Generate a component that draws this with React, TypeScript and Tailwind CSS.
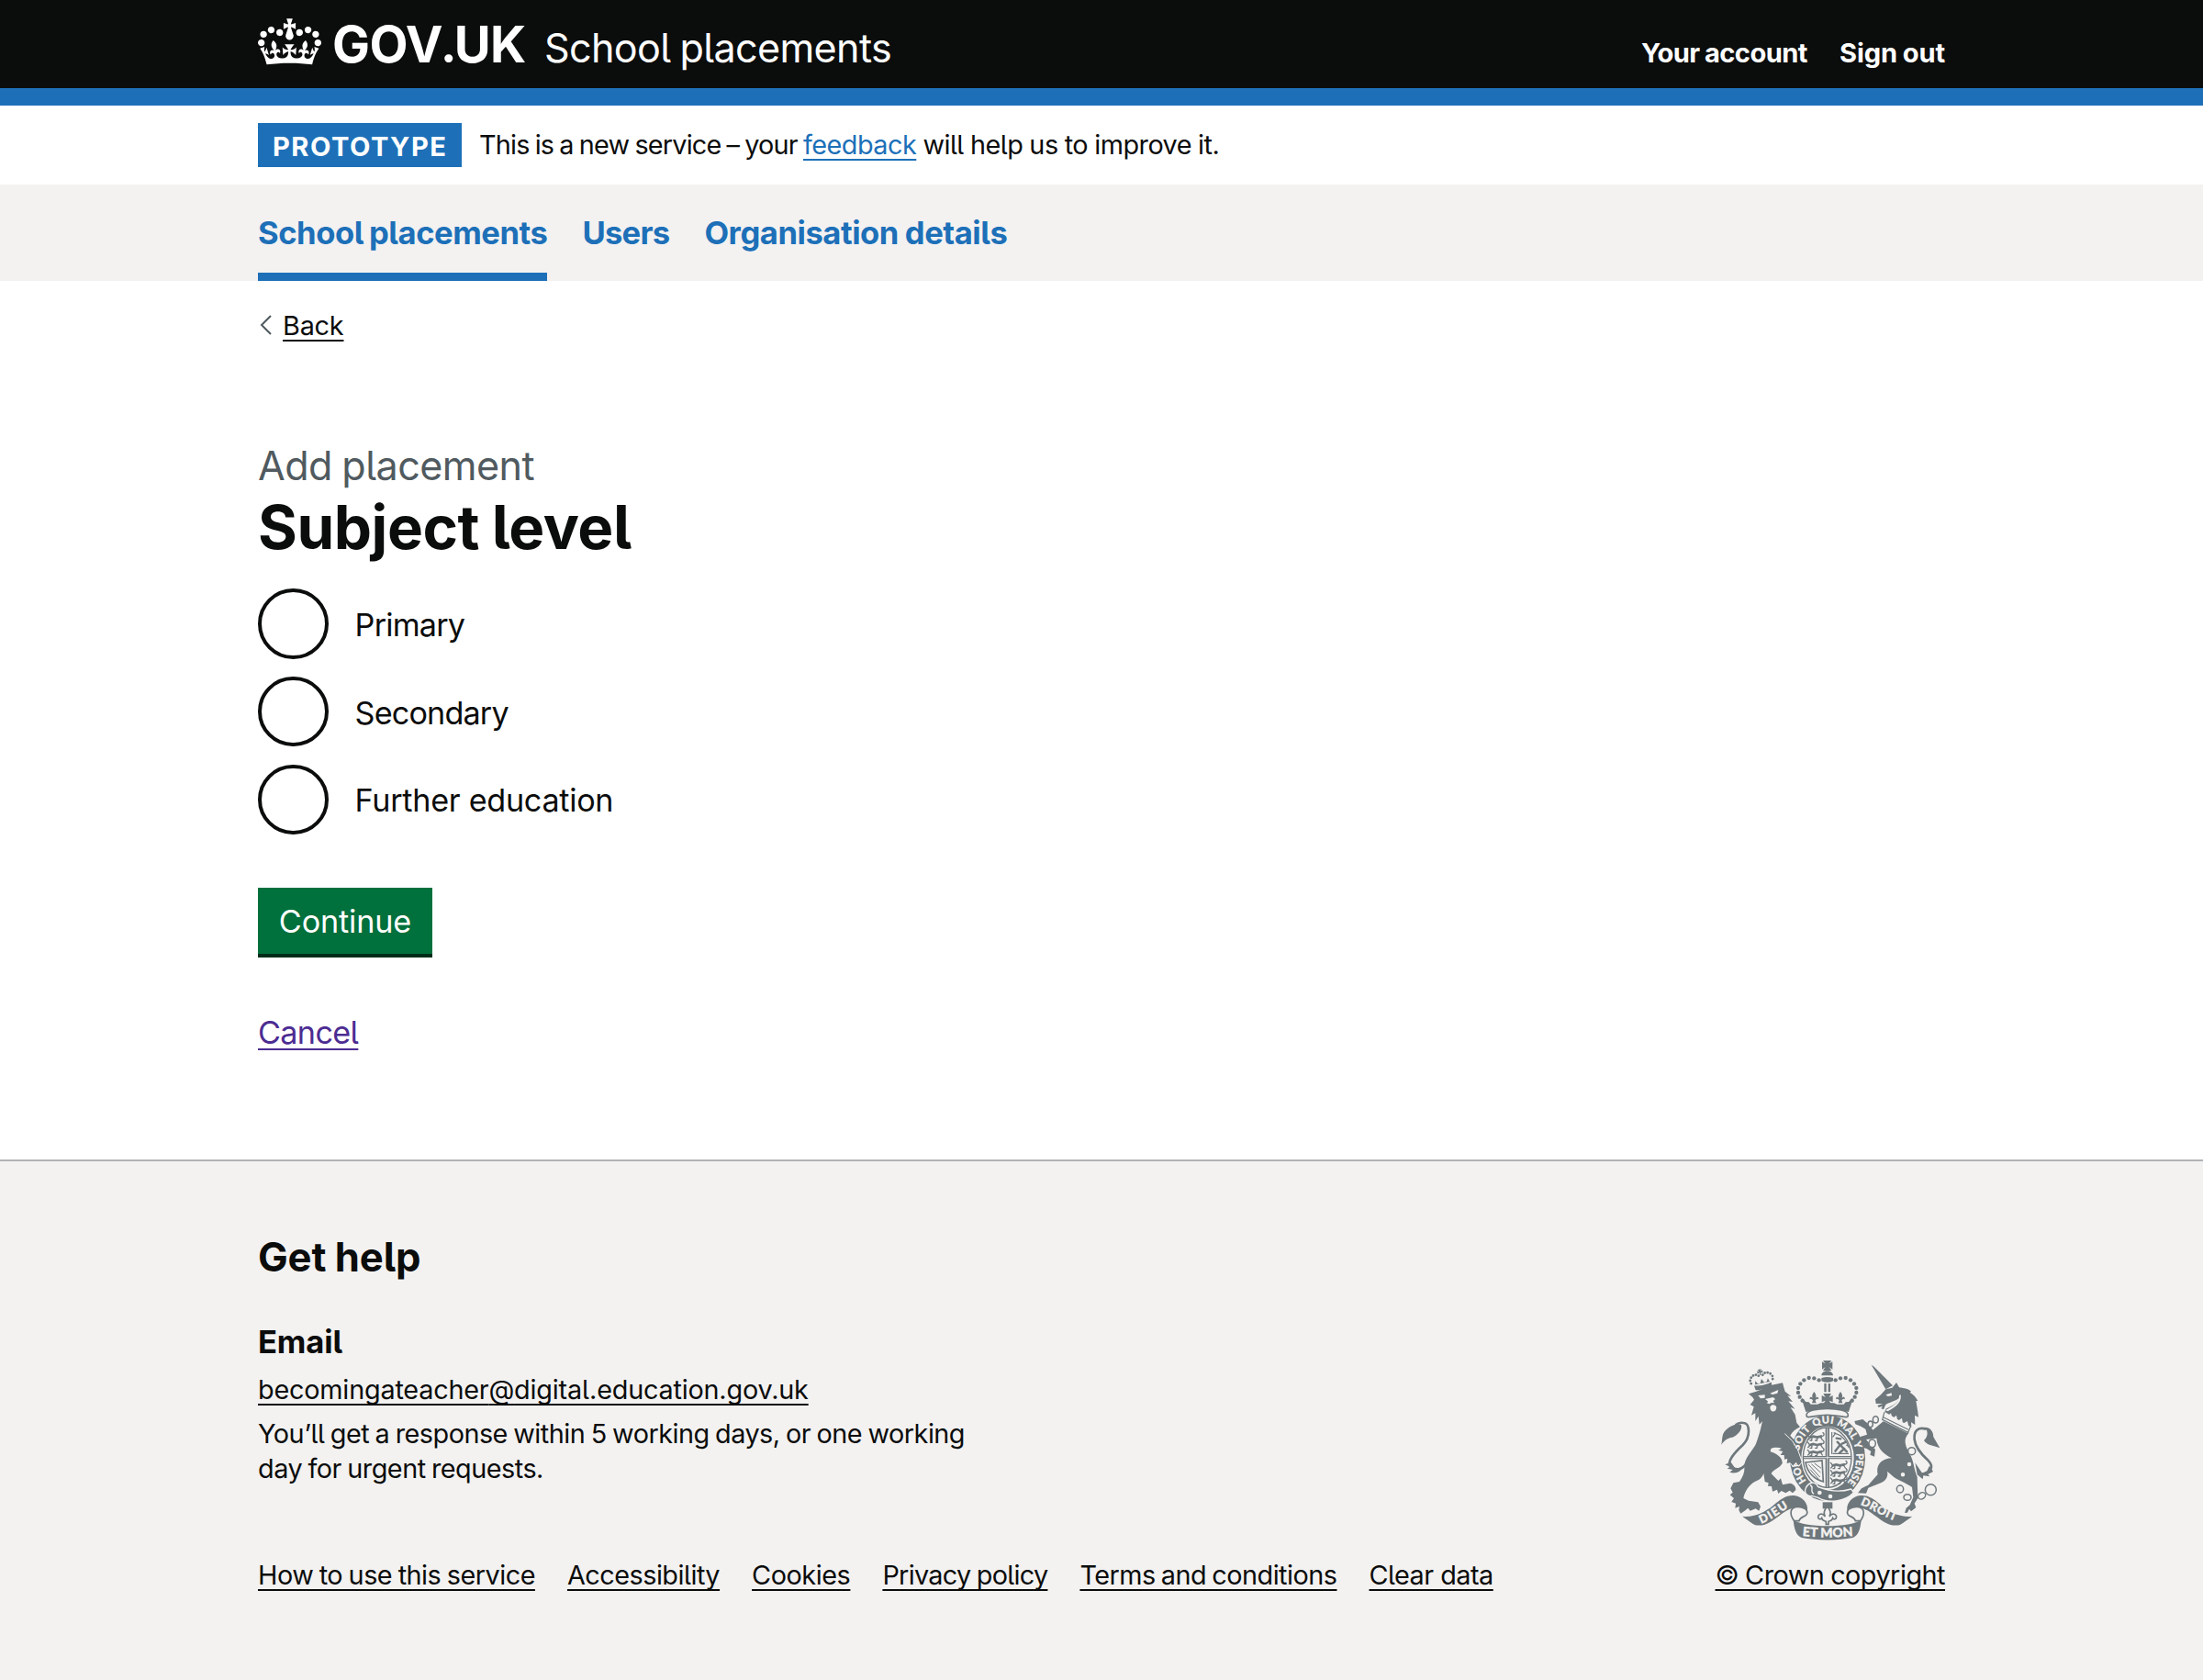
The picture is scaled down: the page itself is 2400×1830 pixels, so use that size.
import React from "react";

function Crown() {
  return (
    <svg viewBox="0 0 132 97" className="mt-[20px] h-[51px] w-[69px] shrink-0 fill-white" aria-hidden="true">
      <path d="M25 30.2c3.5 1.5 7.7-.2 9.1-3.7 1.5-3.6-.2-7.8-3.9-9.2-3.6-1.4-7.6.3-9.1 3.9-1.4 3.5.3 7.5 3.9 9zM9 39.5c3.6 1.5 7.8-.2 9.2-3.7 1.5-3.6-.2-7.8-3.9-9.1-3.6-1.5-7.6.2-9.1 3.8-1.4 3.5.3 7.5 3.8 9zM4.4 57.2c3.5 1.5 7.7-.2 9.1-3.8 1.5-3.6-.2-7.7-3.9-9.1-3.5-1.5-7.6.3-9.1 3.8-1.4 3.5.3 7.6 3.9 9.1zm38.3-21.4c3.5 1.5 7.7-.2 9.1-3.8 1.5-3.6-.2-7.7-3.9-9.1-3.6-1.5-7.6.3-9.1 3.8-1.3 3.6.4 7.7 3.9 9.1zm64.4-5.6c-3.6 1.5-7.8-.2-9.1-3.7-1.5-3.6.2-7.8 3.8-9.2 3.6-1.4 7.7.3 9.2 3.9 1.3 3.5-.4 7.5-3.9 9zm15.9 9.3c-3.6 1.5-7.7-.2-9.1-3.7-1.5-3.6.2-7.8 3.7-9.1 3.6-1.5 7.7.2 9.2 3.8 1.5 3.5-.3 7.5-3.8 9zm4.7 17.7c-3.6 1.5-7.8-.2-9.2-3.8-1.5-3.6.2-7.7 3.9-9.1 3.6-1.5 7.7.3 9.2 3.8 1.3 3.5-.4 7.6-3.9 9.1zM89.3 35.8c-3.6 1.5-7.8-.2-9.2-3.8-1.4-3.6.2-7.7 3.9-9.1 3.6-1.5 7.7.3 9.2 3.8 1.4 3.6-.3 7.7-3.9 9.1zM69.7 17.7l8.9 4.7V9.3l-8.9 2.8c-.2-.3-.5-.6-.9-.9L72.4 0H59.6l3.5 11.2c-.3.3-.6.5-.9.9l-8.8-2.8v13.1l8.8-4.7c.3.3.6.7.9.9l-5 15.4v.1c-.2.8-.4 1.6-.4 2.4 0 4.1 3.1 7.5 7 8.1h.2c.3 0 .7.1 1 .1.4 0 .7 0 1-.1h.2c4-.6 7.1-4.1 7.1-8.1 0-.8-.1-1.7-.4-2.4V34l-5.1-15.4c.4-.2.7-.6 1-.9zM66 92.8c16.9 0 32.8 1.1 47.1 3.2 4-16.9 8.9-26.7 14-33.5l-9.6-3.4c1 4.9 1.1 7.2 0 10.2-1.5-1.4-3-4.3-4.2-8.7L108.6 76c2.8-2 5-3.2 7.5-3.3-4.4 9.4-10 11.9-13.6 11.2-4.3-.8-6.3-4.6-5.6-7.9 1-4.7 5.7-5.9 8-.5 4.3-8.7-3-11.4-7.6-8.8 7.1-7.2 7.9-13.5 2.1-21.1-8 6.1-8.1 12.3-4.5 20.8-4.7-5.4-12.1-2.5-9.5 6.2 3.4-5.2 7.9-2 7.2 3.1-.6 4.3-6.4 7.8-13.5 7.2-10.3-.9-10.9-8-11.2-13.8 2.5-.5 7.1 1.8 11 7.3L80.2 60c-4.1 4.4-8 5.3-12.3 5.4 1.4-4.4 8-11.6 8-11.6H55.5s6.4 7.2 7.9 11.6c-4.2-.1-8-1-12.3-5.4l1.4 16.4c3.9-5.5 8.5-7.7 10.9-7.3-.3 5.8-.9 12.8-11.1 13.8-7.2.6-12.9-2.9-13.5-7.2-.7-5 3.8-8.3 7.1-3.1 2.7-8.7-4.6-11.6-9.4-6.2 3.7-8.5 3.6-14.7-4.6-20.8-5.8 7.6-5 13.9 2.2 21.1-4.7-2.6-11.9.1-7.7 8.8 2.3-5.5 7.1-4.2 8.1.5.7 3.3-1.3 7.1-5.7 7.9-3.5.7-9-1.8-13.5-11.2 2.5.1 4.7 1.3 7.5 3.3l-4.7-15.4c-1.2 4.4-2.7 7.2-4.3 8.7-1.1-3-.9-5.3 0-10.2l-9.5 3.4c5 6.9 9.9 16.7 14 33.5 14.8-2.1 30.8-3.2 47.7-3.2z" />
    </svg>
  );
}

/* Left-hand arch of the royal crown; the right-hand one is its mirror image. */
const beads: [number, number][] = [
  [395, 128], [379, 122], [362, 121], [346, 128], [334, 140], [327, 154], [327, 169], [332, 183], [341, 195],
];

const lionCrownBeads: [number, number][] = [
  [172, 132], [171, 122], [176, 113], [184, 108], [193, 107], [201, 112],
  [215, 112], [223, 107], [232, 108], [240, 113], [245, 122], [244, 132],
];

/* Words on the garter: distance along the ring, then length. */
const garterWords: [string, number, number][] = [
  ["HON", 0, 78],
  ["SOIT", 104, 80],
  ["QUI", 198, 64],
  ["MAL", 273, 74],
  ["Y", 356, 20],
  ["PENSE", 392, 102],
];

function Fleur({ x, y }: { x: number; y: number }) {
  return (
    <path
      transform={`translate(${x} ${y})`}
      d="M0-22C6-14 8-8 5-1C9-8 16-5 14 3C10-1 7 2 4 6L7 15H-7L-4 6C-7 2-10-1-14 3C-16-5-9-8-5-1C-8-8-6-14 0-22Z"
    />
  );
}

/* Walking lions, stacked, as they appear in a quarter of the shield. */
function Lions({ x, y }: { x: number; y: number }) {
  return (
    <g transform={`translate(${x} ${y})`} strokeLinecap="round" fill="none" stroke="#6e777b">
      {[0, 25, 50].map((dy) => (
        <g key={dy} transform={`translate(0 ${dy})`}>
          <path strokeWidth="8" d="M9 7L20 4L32 7L46 4" />
          <path strokeWidth="4" d="M10 8L3 15M16 8L15 17L10 17M34 8L32 17L27 17M44 6L50 15M47 3C56 4 58-4 52-8M6 3L2-2" />
        </g>
      ))}
    </g>
  );
}

function Crest() {
  const g = "#6e777b";
  const w = "#f3f2f1";
  return (
    <svg viewBox="66 58 732 600" className="h-[200px] w-[244px]" fill={g} aria-hidden="true">
      {/* lion */}
      <path d="M165 173L190 165L240 144L276 137L280 152L284 165L304 181L292 179L309 199L295 197L316 222L302 217L317 241L322 268L333 281C318 288 308 297 301 309L318 328L334 352L337 395L325 407L320 394L310 407L303 396L290 400L292 385L281 387L285 373L269 373L277 361L262 357L273 351C262 347 246 347 238 352L236 362C256 368 277 381 275 400C267 416 243 421 239 434L262 457L270 449L276 470L300 465C311 467 320 476 319 487L309 497L299 489L286 497L272 490L262 499L258 486L243 492L240 475L228 474L230 464L218 460L214 433C209 448 199 455 185 460C165 472 152 492 148 514L165 522L196 527L204 541L199 555L188 548L170 555L163 546L152 555L139 564L133 553L135 541L121 546L123 531L109 526L117 514L104 503L113 495L106 482L115 464L135 460C149 440 153 424 151 404C158 372 184 352 190 333C199 308 204 290 210 262L200 273L197 246L187 262L187 236L174 243L182 215L170 208L183 192L178 184Z" />
      <path fill={w} d="M196 178L218 176L218 186L204 188ZM235 171L262 160L259 171L243 175ZM219 190L245 184L252 190L245 196L249 203L240 202L232 206L224 203L229 198ZM236 214C241 206 254 208 256 217C256 228 248 233 241 230C236 226 234 220 236 214Z" />
      <path fill="none" stroke={g} strokeWidth="8" d="M158 400C146 420 126 424 108 412C88 398 122 362 146 340C172 314 170 268 148 268C138 266 128 270 122 275" />
      <path d="M72 344C83 333 72 306 92 290C107 277 128 268 141 274C146 290 128 309 112 315C95 317 84 326 72 344ZM88 404L107 396L124 420L148 408C142 426 124 436 103 429L113 421L95 417L104 411Z" />
      {/* lion's crown */}
      <g transform="rotate(-12 208 130)">
        <path d="M180 141C196 146 222 146 238 141L236 156C222 159 196 159 182 156ZM184 138L187 126L193 136L201 138L208 124L215 138L223 136L229 126L233 138ZM202 92H214L210 99L217 96V106L210 102V111H206V102L199 106V96L206 99Z" />
        {lionCrownBeads.map(([x, y]) => (
          <circle key={x} cx={x} cy={y} r="4.2" />
        ))}
      </g>

      {/* unicorn */}
      <path d="M566 78L575 84L636 146L613 158Z" />
      <path d="M613 158L634 153L648 136L657 152C674 154 689 158 696 165L692 168C704 175 712 184 718 196L712 196L715 214L718 232L720 249L708 243L709 274L696 266L697 282L668 266L610 232L613 222L634 212C644 206 655 196 660 184C646 198 624 200 613 208L606 224L598 221L603 213L590 217L586 211L604 205L581 205L579 191L597 176Z" />
      <path fill={w} d="M613 176L632 170L633 179L620 181ZM662 176C666 198 648 215 620 230L612 226C640 213 657 200 657 178Z" />
      <path d="M606 262L689 300C673 317 672 335 690 366C706 392 704 418 716 444L718 514L707 531L712 544L696 557L690 549L684 561L675 562L680 546L692 536L703 511L699 478C680 463 648 454 632 438L618 426C622 443 614 456 597 464L556 480L549 498L522 497L534 482L556 471L587 436C580 407 598 384 633 383C612 372 586 356 583 318L549 322L566 343L579 354L576 378L562 372L565 361L551 352L527 345L523 315L552 306L547 288L532 279L514 272L511 262L538 256L560 275L571 291Z" />
      <path fill={w} d="M603 256L609 230L618 246L630 236L635 254L648 243L652 262L666 252L669 270L684 262L692 298L684 301L601 260Z" />
      <path fill="none" stroke={g} strokeWidth="3.5" d="M605 249L687 290M609 232L602 257L686 299L695 278" />
      <path fill="none" stroke={g} strokeWidth="8" d="M744 288C722 280 704 292 707 322C710 350 732 373 753 392C772 411 758 432 732 435" />
      <path d="M732 284C752 278 768 290 769 314L790 350C774 342 746 342 738 325C746 318 752 306 747 292ZM709 398L733 433L748 425L756 408L768 427L751 436L757 443L736 440L734 452L716 437Z" />
      <g fill={w} stroke={g} strokeWidth="4.5">
        <ellipse cx="563" cy="272" rx="8" ry="10" />
        <ellipse cx="580" cy="257" rx="9" ry="11" />
        <ellipse cx="569" cy="335" rx="11" ry="13" />
        <circle cx="698" cy="360" r="12" />
        <circle cx="690" cy="403" r="9" />
        <circle cx="669" cy="437" r="9" />
        <ellipse cx="660" cy="484" rx="11" ry="12" />
        <ellipse cx="684" cy="511" rx="12" ry="10" />
        <ellipse cx="731" cy="506" rx="13" ry="10" transform="rotate(-35 731 506)" />
        <circle cx="760" cy="486" r="18" />
      </g>

      {/* royal crown */}
      <path d="M408 64H436L428 74L439 68V93L428 85L436 97H408L416 85L405 93V68L416 74ZM403 113C404 93 440 93 441 113ZM403 121Q422 115 441 121V131Q422 140 403 131ZM412 139H419V167H412ZM425 139H432V167H425ZM409 172H435L428 184L440 178V200L428 195L436 207H408L416 195L404 200V178L416 184Z" />
      {beads.map(([x, y]) => (
        <g key={`${x}-${y}`}>
          <circle cx={x} cy={y} r="6.5" />
          <circle cx={844 - x} cy={y} r="6.5" />
        </g>
      ))}
      <Fleur x={379} y={188} />
      <Fleur x={465} y={188} />
      <path d="M339 186L352 199L362 200L368 207L390 207L400 203H444L454 207L476 207L482 200L492 199L505 186C502 206 496 218 492 232C450 222 394 222 352 232C348 218 342 206 339 186Z" />

      {/* garter */}
      <ellipse cx="423" cy="383" rx="123" ry="140" />
      <ellipse cx="423" cy="383" rx="86" ry="104" fill={w} />
      <path fill={w} stroke={g} strokeWidth="5" d="M354 245C350 226 394 221 422 221S494 226 490 245C488 255 464 242 422 242S356 255 354 245Z" />
      <path id="garter" fill="none" d="M353.8 457.4A94 112 0 1 1 476.4 473" />
      <text fill={w} stroke={w} strokeWidth="0.8" className="font-[Lato] text-[33px] font-black tracking-normal">
        {garterWords.map(([word, offset, length]) => (
          <textPath key={word} href="#garter" startOffset={offset} textLength={length}>
            {word}
          </textPath>
        ))}
      </text>
      <ellipse cx="422" cy="381" rx="79" ry="98" fill="none" stroke={g} strokeWidth="4" />
      <path d="M416 283H429V376H501V386H429V480H416V386H343V376H416Z" />
      <path stroke={w} strokeWidth="2.5" d="M422.5 285V478M345 381H500" />
      <Lions x={356} y={308} />
      <Lions x={431} y={400} />
      <path fill="none" stroke={g} strokeWidth="7" strokeLinecap="round" d="M455 330L474 350M452 318L466 320M474 350L486 362M462 342L448 360M470 336L484 330M478 352L462 366" />
      <path fill="none" stroke={g} strokeWidth="3.5" d="M437 298V370M440 368H492M443 300C470 308 486 325 493 350M440 314L450 300M484 340L494 346" />
      <path fill="none" stroke={g} strokeWidth="5" d="M351 397L405 391L409 460C380 452 357 430 351 397Z" />
      <path fill="none" stroke={g} strokeWidth="3" d="M361 404L398 445M370 402L400 430M380 400L402 416M366 420L394 452" />
      {/* buckle and strap end */}
      <path stroke={w} strokeWidth="4" d="M352 480C360 464 376 458 388 470L392 477C425 490 462 496 500 484L508 496C480 525 425 532 392 512L372 506C356 510 345 496 352 480Z" />
      <path fill="none" stroke={w} strokeWidth="4" d="M366 472C382 476 362 488 378 500" />
      <circle cx="397" cy="496" r="7" fill={w} />
      <circle cx="432" cy="508" r="7" fill={w} />
      {/* lion's forepaw over the garter */}
      <path d="M274 297L306 328L322 354L337 395L327 408L320 396L310 408L303 397L290 398L294 384L282 384Z" />
      <path fill="none" stroke={w} strokeWidth="3" d="M283 303L308 327L325 354L340 396L328 410L320 399L310 411L302 400" />

      {/* badge below the shield */}
      <path d="M407 527H439V548H407Z" />
      <path fill={w} stroke={g} strokeWidth="5" d="M422 541C433 553 434 565 429 574C438 560 452 565 452 576C451 584 443 584 440 579C438 588 430 589 426 590V599H418V590C414 589 406 588 404 579C401 584 393 584 392 576C392 565 406 560 415 574C410 565 411 553 422 541Z" />

      {/* motto ribbon */}
      <path d="M144 573C180 578 218 560 245 538C268 518 288 503 314 505C342 508 360 532 357 553L350 566C344 548 330 541 312 545C280 553 250 590 218 600C200 605 186 603 178 597Z" />
      <path d="M700 573C664 578 626 560 599 538C576 518 556 503 530 505C502 508 484 532 487 553L494 566C500 548 514 541 532 545C564 553 594 590 626 600C644 605 658 603 666 597Z" />
      <path fill={w} stroke={g} strokeWidth="5" d="M314 588C300 570 298 548 318 543C342 540 362 552 355 566C349 577 334 572 330 588Z" />
      <path fill={w} stroke={g} strokeWidth="5" d="M530 588C544 570 546 548 526 543C502 540 482 552 489 566C495 577 510 572 514 588Z" />
      <path d="M311 584C340 612 504 612 533 584C531 612 524 636 506 643C460 653 384 653 338 643C320 636 313 612 311 584Z" />
      <path id="dieu" fill="none" d="M206 597C240 585 268 560 320 529" />
      <path id="droit" fill="none" d="M529 535C560 545 598 574 690 606" />
      <path id="etmon" fill="none" d="M341 637Q422 646 520 636" />
      <g fill={w} stroke={w} strokeWidth="1" className="font-[Lato] text-[38px] font-black tracking-normal">
        <text>
          <textPath href="#dieu" textLength="104">DIEU</textPath>
        </text>
        <text>
          <textPath href="#droit" textLength="126">DROIT</textPath>
        </text>
        <text className="text-[42px]">
          <textPath href="#etmon" textLength="166">ET MON</textPath>
        </text>
      </g>
    </svg>
  );
}

const link = "underline decoration-[2px] underline-offset-[5px] [text-decoration-skip-ink:none]";

const levels = [
  { label: "Primary", spacing: "tracking-[-0.8px]" },
  { label: "Secondary", spacing: "tracking-[-0.85px]" },
  { label: "Further education", spacing: "tracking-[-0.3px]" },
];

const footerLinks = [
  { label: "How to use this service", spacing: "[word-spacing:-1.1px]" },
  { label: "Accessibility", spacing: "" },
  { label: "Cookies", spacing: "tracking-[-0.43px]" },
  { label: "Privacy policy", spacing: "tracking-[-0.7px] [word-spacing:-1.1px]" },
  { label: "Terms and conditions", spacing: "[word-spacing:-1.5px]" },
  { label: "Clear data", spacing: "" },
];

export default function App() {
  return (
    <div className="flex min-h-[1830px] w-full flex-col bg-white font-[Inter,sans-serif] text-[28.8px] leading-[38px] tracking-[-0.5px] text-[#0b0c0c] [font-feature-settings:'cv05']">
      <header className="border-b-[19px] border-[#1d70b8] bg-[#0b0c0c] text-white">
        <div className="mx-auto flex h-24 w-[1838px] items-start">
          <Crown />
          <span className="mt-[17px] ml-[12px] w-[211px] text-[54.6px] leading-[60px] font-bold whitespace-nowrap">
            GOV<span className="font-[Lato] font-black">.</span>UK
          </span>
          <span className="mt-[22px] ml-[20px] text-[43.1px] leading-[60px] tracking-[-0.65px] [word-spacing:-1.3px]">School placements</span>
          <nav className="mt-[38px] ml-auto flex gap-[35px] text-[29.1px] leading-[40px] font-bold">
            <a className="tracking-[-0.55px] [word-spacing:-1px]">Your account</a>
            <a className="tracking-[-0.1px] [word-spacing:-1.1px]">Sign out</a>
          </nav>
        </div>
      </header>

      <div className="mx-auto flex h-[86px] w-[1838px] items-center">
        <strong className="flex h-12 w-[222px] items-center bg-[#1d70b8] pt-[3px] pl-[16px] text-[29.1px] font-bold tracking-[1.5px] text-white">
          PROTOTYPE
        </strong>
        <p className="ml-[19px] whitespace-pre">
          <span className="tracking-[-0.8px] [word-spacing:-1.2px]">This is a new service – your </span>
          <a className={"text-[#1d70b8] " + link}>feedback</a>
          <span className="[word-spacing:-0.5px]"> will help us to improve it.</span>
        </p>
      </div>

      <nav className="bg-[#f3f2f1]">
        <div className="mx-auto flex h-[105px] w-[1838px] gap-[38px] text-[34.6px] font-bold tracking-[-0.45px] text-[#1d70b8]">
          <a className="flex items-center border-b-[9px] border-[#1d70b8] pt-[8px] [word-spacing:-1.7px]">School placements</a>
          <a className="flex items-center pb-px tracking-[-0.75px]">Users</a>
          <a className="flex items-center pb-px [word-spacing:-0.8px]">Organisation details</a>
        </div>
      </nav>

      <main className="mx-auto flex w-[1838px] flex-col items-start">
        <div className="mt-[29px] flex h-[38px] items-center">
          <svg viewBox="0 0 14 22" className="ml-[2px] h-[22px] w-[14px]" fill="none" stroke="#505a5f" strokeWidth="2">
            <path d="M12 1L2 11L12 21" />
          </svg>
          <a className={"ml-[11px] pt-px tracking-[-0.2px] " + link}>Back</a>
        </div>
        <h1 className="mt-[106px]">
          <span className="block h-[57px] text-[43.1px] leading-[56px] tracking-[-0.55px] text-[#505a5f] [word-spacing:-1.1px]">Add placement</span>
          <span className="block h-[77px] text-[65.5px] leading-[78px] font-bold tracking-[-0.45px] [word-spacing:-1.3px]">Subject level</span>
        </h1>
        <div className="mt-[28px] flex flex-col gap-[19.2px] text-[34.2px]">
          {levels.map(({ label, spacing }) => (
            <label key={label} className="flex h-[76.6px] items-center">
              <span className="size-[76.6px] rounded-full border-[4px] border-[#0b0c0c]" />
              <span className={"ml-[29px] pt-[3px] " + spacing}>{label}</span>
            </label>
          ))}
        </div>
        <button className="mt-[58px] flex h-[72px] w-[190px] items-center justify-center bg-[#00703c] pt-[2px] text-[34.2px] tracking-[-0.15px] text-white shadow-[0_4px_0_#002d18]">
          Continue
        </button>
        <a className={"mt-[62px] text-[34.2px] leading-[48px] tracking-[-0.65px] text-[#4c2c92] " + link}>Cancel</a>
      </main>

      <footer className="mt-[114px] grow border-t-2 border-[#b1b4b6] bg-[#f3f2f1]">
        <div className="mx-auto flex w-[1838px] items-end justify-between pt-[77px]">
          <div>
            <h2 className="text-[43.6px] leading-[56px] font-bold tracking-[-0.1px] [word-spacing:-0.8px]">Get help</h2>
            <h3 className="mt-[40px] text-[34.6px] leading-[46px] font-bold tracking-[-0.15px]">Email</h3>
            <p className="mt-[11px] tracking-[-0.2px]">
              <a className={link}>
                becomingateacher<span className="[text-decoration-skip-ink:auto]">@</span>digital.education.gov.uk
              </a>
            </p>
            <p className="mt-[10px] w-[800px] leading-[38.3px] [word-spacing:-1.2px]">
              You’ll get a response within 5 working days, or one working
              <br />
              day for urgent requests.
            </p>
            <nav className="mt-[77px] flex gap-[35px]">
              {footerLinks.map(({ label, spacing }) => (
                <a key={label} className={spacing + " " + link}>
                  {label}
                </a>
              ))}
            </nav>
          </div>
          <div className="flex flex-col items-center gap-[17px]">
            <Crest />
            <a className={"[word-spacing:-0.8px] " + link}>© Crown copyright</a>
          </div>
        </div>
      </footer>
    </div>
  );
}
